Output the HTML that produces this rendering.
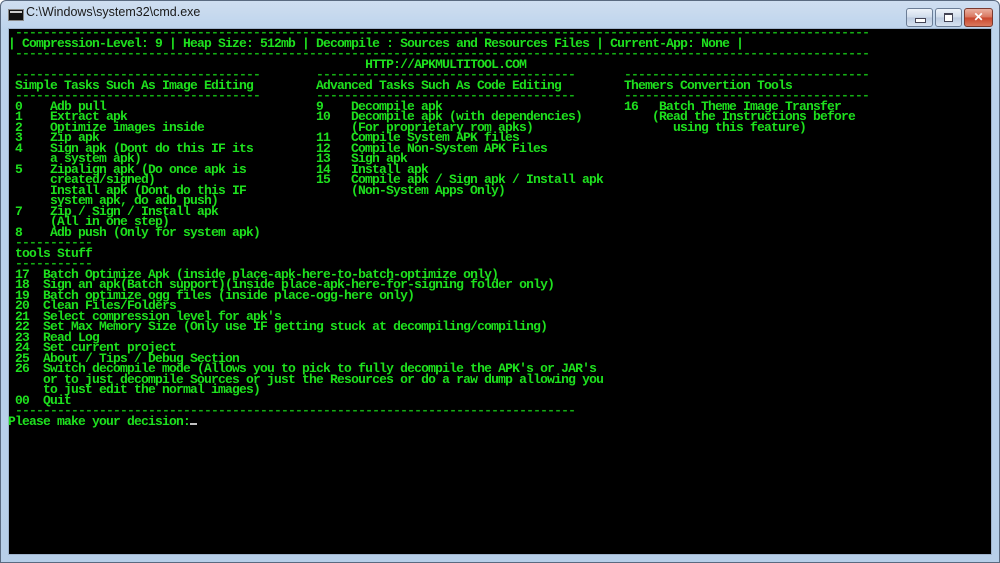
<!DOCTYPE html>
<html><head><meta charset="utf-8">
<style>
html,body{margin:0;padding:0;}
body{width:1000px;height:563px;position:relative;overflow:hidden;background:#fff;}
.frame{position:absolute;left:0;top:0;width:998px;height:561px;border:1px solid #5a6a80;border-radius:6px 6px 0 0;
 background:linear-gradient(#cfdef0 0px,#bcd3ec 30px,#b7cfe9 100%);}
.title{position:absolute;left:26px;top:5px;font:12.5px "Liberation Sans",sans-serif;color:#1a1a1a;}
.ico{position:absolute;left:8px;top:9px;width:14px;height:10px;background:#111;border:1px solid #888;}
.ico:after{content:"";position:absolute;left:1px;top:1px;width:12px;height:2px;background:#ccc;}
.btn{position:absolute;top:8px;height:17px;border:1px solid #6b7d96;border-radius:3px;
 background:linear-gradient(#eef3fa,#cfdbea 50%,#bccbe0 51%,#d7e2f0);}
.close{background:linear-gradient(#eab0a0,#d8735c 50%,#c8452c 51%,#d9775d);border-color:#7a3a30;}
.con{position:absolute;left:8px;top:28px;width:982px;height:525px;background:#000;border:1px solid #9fb3cc;box-sizing:content-box;}
pre{position:absolute;margin:0;font:bold 13px/10.5px "Liberation Mono",monospace;letter-spacing:-0.8px;color:#1ee01e;white-space:pre;}
.d{color:#14b014;}
.cur{display:inline-block;width:7px;height:2px;background:#c0c0c0;vertical-align:baseline;}
</style></head><body>
<div class="frame"></div>
<div class="ico"></div>
<div class="title">C:\Windows\system32\cmd.exe</div>
<div class="btn" style="left:906px;width:25px;"><div style="position:absolute;left:8px;top:9px;width:9px;height:3px;background:#fff;border:1px solid #445;"></div></div>
<div class="btn" style="left:935px;width:25px;"><div style="position:absolute;left:8px;top:4px;width:7px;height:6px;border:1px solid #445;border-top-width:2px;background:#fff;"></div></div>
<div class="btn close" style="left:964px;width:27px;"><div style="position:absolute;left:0;top:0;width:27px;text-align:center;font:bold 12px/17px 'Liberation Sans',sans-serif;color:#fff;">✕</div></div>
<div class="con"></div>
<pre style="left:8px;top:28px;"><span class="d"> --------------------------------------------------------------------------------------------------------------------------</span>
| Compression-Level: 9 | Heap Size: 512mb | Decompile : Sources and Resources Files | Current-App: None |
<span class="d"> --------------------------------------------------------------------------------------------------------------------------</span>
                                                   HTTP://APKMULTITOOL.COM</pre>
<pre style="left:8px;top:70px;"><span class="d"> -----------------------------------</span>
 Simple Tasks Such As Image Editing
<span class="d"> -----------------------------------</span>
 0    Adb pull
 1    Extract apk
 2    Optimize images inside
 3    Zip apk
 4    Sign apk (Dont do this IF its
      a system apk)
 5    Zipalign apk (Do once apk is
      created/signed)
      Install apk (Dont do this IF
      system apk, do adb push)
 7    Zip / Sign / Install apk
      (All in one step)
 8    Adb push (Only for system apk)
<span class="d"> -----------</span>
 tools Stuff
<span class="d"> -----------</span>
 17  Batch Optimize Apk (inside place-apk-here-to-batch-optimize only)
 18  Sign an apk(Batch support)(inside place-apk-here-for-signing folder only)
 19  Batch optimize ogg files (inside place-ogg-here only)
 20  Clean Files/Folders
 21  Select compression level for apk's
 22  Set Max Memory Size (Only use IF getting stuck at decompiling/compiling)
 23  Read Log
 24  Set current project
 25  About / Tips / Debug Section
 26  Switch decompile mode (Allows you to pick to fully decompile the APK's or JAR's
     or to just decompile Sources or just the Resources or do a raw dump allowing you
     to just edit the normal images)
 00  Quit
<span class="d"> --------------------------------------------------------------------------------</span>
Please make your decision:<span class="cur"></span></pre>
<pre style="left:316px;top:70px;"><span class="d">-------------------------------------</span>
Advanced Tasks Such As Code Editing
<span class="d">-------------------------------------</span>
9    Decompile apk
10   Decompile apk (with dependencies)
     (For proprietary rom apks)
11   Compile System APK files
12   Compile Non-System APK Files
13   Sign apk
14   Install apk
15   Compile apk / Sign apk / Install apk
     (Non-System Apps Only)</pre>
<pre style="left:624px;top:70px;"><span class="d">-----------------------------------</span>
Themers Convertion Tools
<span class="d">-----------------------------------</span>
16   Batch Theme Image Transfer
    (Read the Instructions before
       using this feature)</pre>
</body></html>
